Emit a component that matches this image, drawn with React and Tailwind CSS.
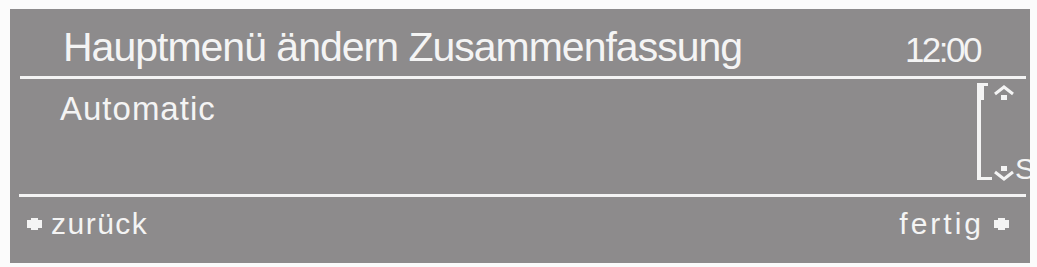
const Bullet = () => (
  <svg width="15" height="12" viewBox="0 0 15 12" className="shrink-0">
    <polygon points="4,0 11,0 11,2 15,2 15,10 11,10 11,12 4,12 4,10 0,10 0,2 4,2" fill="#f4f4f4" />
  </svg>
);

const ScrollMarker = () => (
  <div className="relative w-[53px] h-[98px]">
    {/* bracket */}
    <div className="absolute left-0 top-0 w-[7px] h-[17px] bg-[#f4f4f4]" />
    <div className="absolute left-0 top-0 w-[11px] h-[3px] bg-[#f4f4f4]" />
    <div className="absolute left-0 top-0 w-[4px] h-[97px] bg-[#f4f4f4]" />
    <div className="absolute left-0 top-[94px] w-[15px] h-[3px] bg-[#f4f4f4]" />
    {/* up arrow */}
    <svg className="absolute left-[16px] top-[2px]" width="22" height="16" viewBox="0 0 22 16">
      <polyline points="2,9 11,2 20,9" fill="none" stroke="#f4f4f4" strokeWidth="3" />
      <rect x="8" y="10" width="6" height="5" fill="#f4f4f4" />
    </svg>
    {/* down arrow */}
    <svg className="absolute left-[16px] top-[82px]" width="22" height="16" viewBox="0 0 22 16">
      <rect x="8" y="1" width="6" height="5" fill="#f4f4f4" />
      <polyline points="2,7 11,14 20,7" fill="none" stroke="#f4f4f4" strokeWidth="3" />
    </svg>
    <span className="absolute left-[38px] top-[71px] text-[30px] leading-none text-[#f4f4f4]">S</span>
  </div>
);

export default function App() {
  return (
    <div
      className="w-[1037px] h-[267px] bg-[#fbfbfb] pt-[9px] pl-[10px]"
      style={{ fontFamily: '"Liberation Sans", Arial, sans-serif' }}
    >
      <div className="w-[1020px] h-[254px] bg-[#8d8b8c] flex flex-col overflow-hidden text-[#f4f4f4]">
        {/* Header */}
        <div className="h-[67px] flex items-end justify-between pl-[53px] pr-[50px] pb-[8px]">
          <div className="text-[41px] leading-none tracking-[-1px]">Hauptmenü ändern Zusammenfassung</div>
          <div className="text-[35px] leading-none tracking-[-2.5px] pb-[1px]">12:00</div>
        </div>
        <div className="ml-[10px] mr-[4px] h-[3px] bg-[#f4f4f4]" />

        {/* Content */}
        <div className="h-[115px] flex justify-between pl-[50px]">
          <div className="pt-[13px] text-[33px] leading-none tracking-[1px]">Automatic</div>
          <div className="pt-[4px] ml-auto">
            <ScrollMarker />
          </div>
        </div>
        <div className="ml-[9px] mr-[4px] h-[3px] bg-[#f4f4f4]" />

        {/* Footer */}
        <div className="flex-1 flex items-start justify-between pl-[17px] pr-[21px] pt-[12px]">
          <div className="flex items-center gap-[9px] text-[30px] leading-none">
            <Bullet />
            <span className="tracking-[1.5px]">zurück</span>
          </div>
          <div className="flex items-center gap-[10px] text-[30px] leading-none">
            <span className="tracking-[3px]">fertig</span>
            <Bullet />
          </div>
        </div>
      </div>
    </div>
  );
}
